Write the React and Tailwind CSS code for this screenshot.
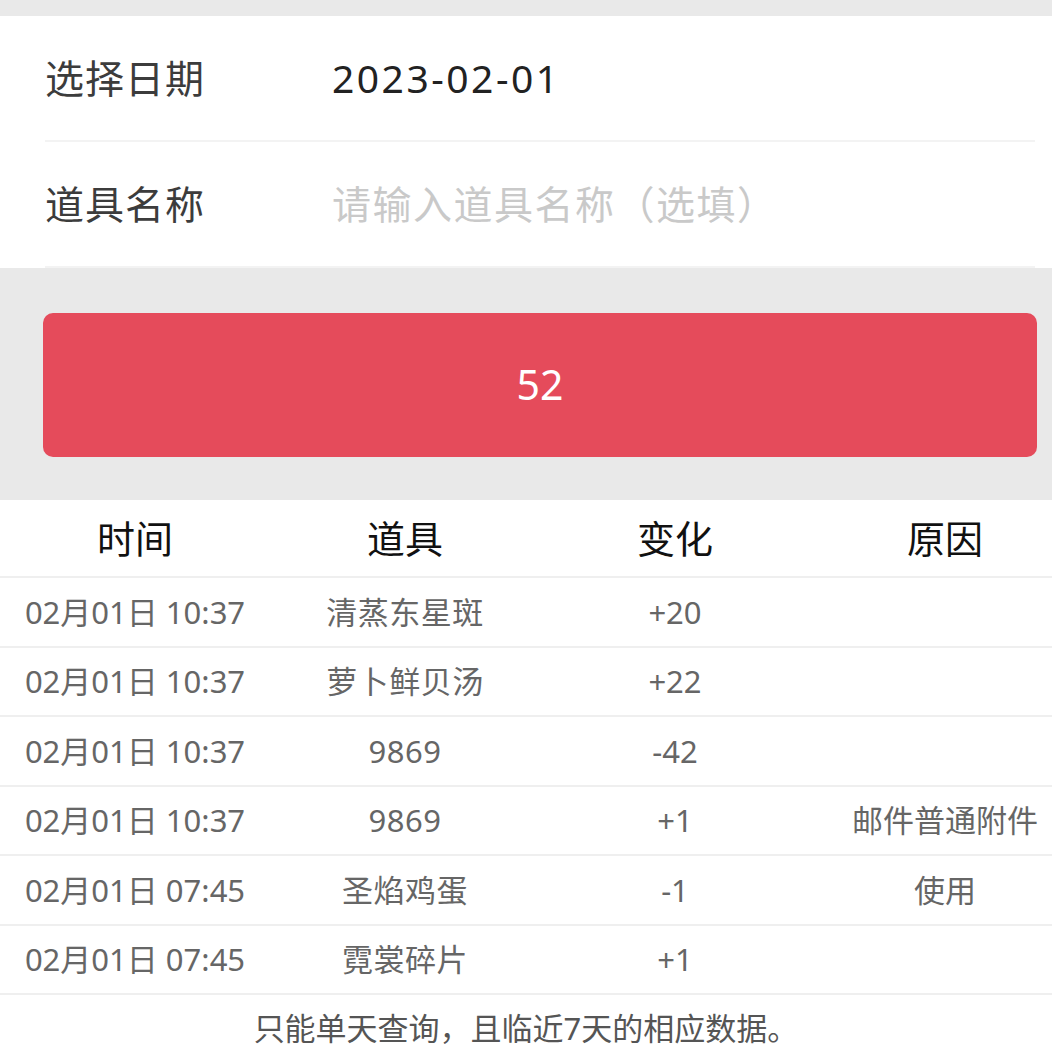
export default function App() {
  const rows = [
    ["02月01日 10:37", "清蒸东星斑", "+20", ""],
    ["02月01日 10:37", "萝卜鲜贝汤", "+22", ""],
    ["02月01日 10:37", "9869", "-42", ""],
    ["02月01日 10:37", "9869", "+1", "邮件普通附件"],
    ["02月01日 07:45", "圣焰鸡蛋", "-1", "使用"],
    ["02月01日 07:45", "霓裳碎片", "+1", ""],
  ];
  return (
    <div
      className="w-[1052px] h-[1057px] overflow-hidden bg-white"
      style={{ fontFamily: '"Noto Sans", "Noto Sans CJK SC", sans-serif' }}
    >
      <div className="h-[16px] bg-[#e9e9e9]" />
      <div className="bg-white pl-[45px] pr-[17px]">
        <div className="h-[126px] flex items-center border-b-2 border-[#f3f3f3]">
          <div className="w-[287px] text-[39px] tracking-[1px] text-[#3c3c3c]">选择日期</div>
          <div className="text-[39px] tracking-[2.5px] text-[#222]">2023-02-01</div>
        </div>
        <div className="h-[126px] flex items-center border-b-2 border-[#f3f3f3]">
          <div className="w-[287px] text-[39px] tracking-[1px] text-[#3c3c3c]">道具名称</div>
          <div className="text-[39px] tracking-[1.5px] text-[#c9c9c9]">请输入道具名称（选填）</div>
        </div>
      </div>
      <div className="bg-[#e9e9e9] h-[232px] pt-[45px] pl-[43px] pr-[15px]">
        <div className="h-[144px] rounded-[10px] bg-[#e54b5b] flex items-center justify-center text-white text-[41px]">
          52
        </div>
      </div>
      <div className="w-[1080px]">
        <div className="grid grid-cols-[270px_270px_270px_270px] h-[78px] items-center border-b-2 border-[#efefef] text-[38px] text-[#111]">
          <div className="text-center">时间</div>
          <div className="text-center">道具</div>
          <div className="text-center">变化</div>
          <div className="text-center">原因</div>
        </div>
        {rows.map((r, i) => (
          <div
            key={i}
            className="grid grid-cols-[270px_270px_270px_270px] h-[69.5px] items-center border-b-2 border-[#efefef] text-[31px] text-[#666]"
          >
            <div className="text-center whitespace-nowrap">{r[0]}</div>
            <div className="text-center whitespace-nowrap tracking-[0.5px]">{r[1]}</div>
            <div className="text-center whitespace-nowrap">{r[2]}</div>
            <div className="text-center whitespace-nowrap">{r[3]}</div>
          </div>
        ))}
      </div>
      <div className="w-[1052px] h-[62px] flex items-center justify-center pt-[4px] text-[31px] text-[#555]">
        只能单天查询，且临近7天的相应数据。
      </div>
    </div>
  );
}
